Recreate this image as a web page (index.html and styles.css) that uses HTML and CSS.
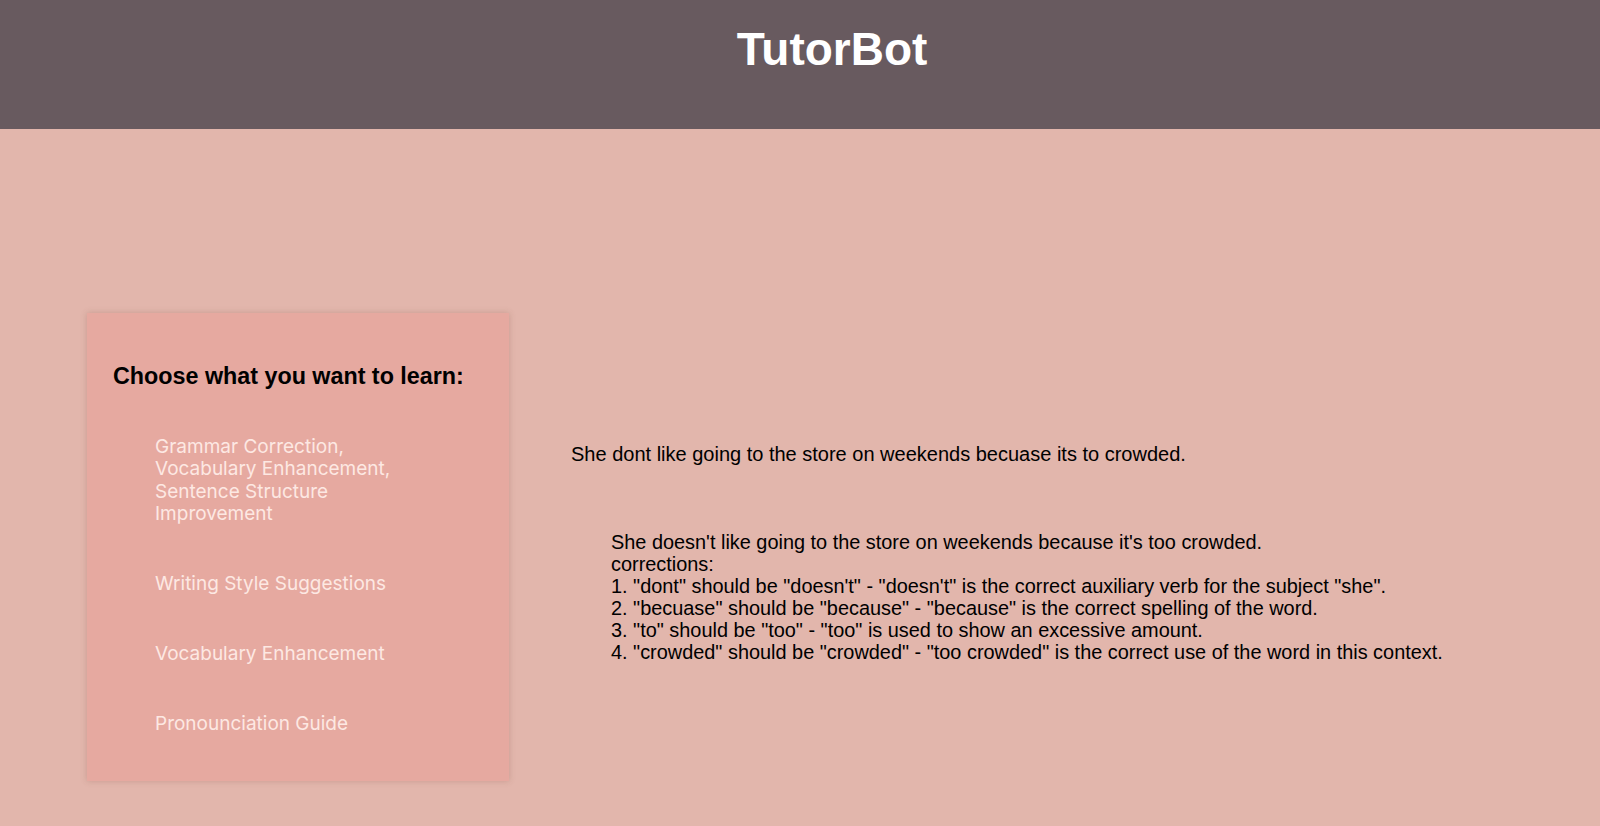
FILE: index.html
```html
<!DOCTYPE html>
<html lang="en">
<head>
<meta charset="utf-8">
<title>TutorBot</title>
<link rel="stylesheet" href="styles.css">
</head>
<body>
<header class="topbar">
  <h1 class="brand">TutorBot</h1>
</header>
<main class="main">
  <aside class="menu-card">
    <h2 class="menu-title">Choose what you want to learn:</h2>
    <ul class="menu-list">
      <li class="menu-item">Grammar Correction, Vocabulary Enhancement, Sentence Structure Improvement</li>
      <li class="menu-item">Writing Style Suggestions</li>
      <li class="menu-item">Vocabulary Enhancement</li>
      <li class="menu-item">Pronounciation Guide</li>
    </ul>
  </aside>
  <section class="chat">
    <p class="user-msg">She dont like going to the store on weekends becuase its to crowded.</p>
    <div class="bot-msg">
      <div class="line">She doesn't like going to the store on weekends because it's too crowded.</div>
      <div class="line">corrections:</div>
      <div class="line">1. "dont" should be "doesn't" - "doesn't" is the correct auxiliary verb for the subject "she".</div>
      <div class="line">2. "becuase" should be "because" - "because" is the correct spelling of the word.</div>
      <div class="line">3. "to" should be "too" - "too" is used to show an excessive amount.</div>
      <div class="line">4. "crowded" should be "crowded" - "too crowded" is the correct use of the word in this context.</div>
    </div>
  </section>
</main>
</body>
</html>
```
FILE: styles.css
```css
* { box-sizing: border-box; }

html, body {
  margin: 0;
  padding: 0;
}

body {
  background: #e2b6ac;
  font-family: "Liberation Sans", Arial, Helvetica, sans-serif;
  color: #000;
  min-height: 826px;
}

.topbar {
  background: #685a5f;
  height: 129px;
  padding: 25px 0 0 64px;
  text-align: center;
}

.brand {
  margin: 0;
  color: #fff;
  font-size: 46px;
  font-weight: 700;
  line-height: 49px;
}

.main {
  display: flex;
  align-items: flex-start;
  padding: 184px 0 0 87px;
}

.menu-card {
  width: 422px;
  height: 468px;
  background: #e6a9a0;
  box-shadow: 0 0 6px rgba(120, 70, 60, 0.25);
  padding: 50px 26px 0 26px;
  flex-shrink: 0;
}

.menu-title {
  margin: 0;
  font-size: 23.3px;
  font-weight: 700;
  line-height: 27px;
  color: #000;
}

.menu-list {
  list-style: none;
  margin: 46px 0 0 0;
  padding: 0 0 0 42px;
  display: flex;
  flex-direction: column;
  gap: 47.6px;
}

.menu-item {
  font-family: Inter, "Noto Sans", sans-serif;
  font-size: 19px;
  line-height: 22.4px;
  color: #fde8e3;
  max-width: 270px;
}

.chat {
  padding: 130px 0 0 62px;
}

.user-msg {
  margin: 0;
  font-size: 20px;
  line-height: 23px;
}

.bot-msg {
  margin-top: 65px;
  padding-left: 40px;
  font-size: 19.9px;
  line-height: 22.1px;
}
```
